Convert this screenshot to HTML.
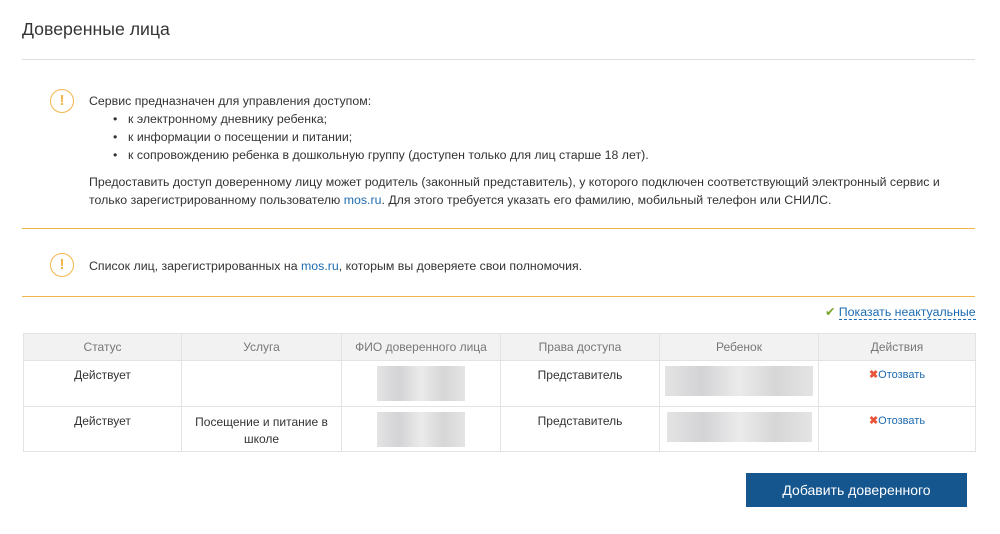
<!DOCTYPE html>
<html><head><meta charset="utf-8"><style>
body{margin:0;width:1000px;height:534px;background:#fff;font-family:"Liberation Sans",sans-serif;color:#333;position:relative;overflow:hidden}
.a{position:absolute}
.t{font-size:12.35px;line-height:17px}
.ic{position:absolute;width:22px;height:22px;border:1.5px solid #f3b54a;border-radius:50%;color:#f3b54a;font-size:15px;font-weight:bold;text-align:center;line-height:22px}
a{color:#1d6bb0;text-decoration:none}
table{position:absolute;left:23px;top:333px;border-collapse:collapse;width:953px;font-size:12px}
td,th{border:1px solid #e3e3e3;text-align:center;vertical-align:top;padding:0}
th{background:#f2f2f2;color:#777;font-weight:normal;height:26px;vertical-align:middle}
.bl{display:inline-block;background:linear-gradient(90deg,#ddd,#c8c8cc,#e6e6e6,#ccc,#ddd);opacity:.8}
.x{color:#e8553b;font-weight:bold;font-size:11px}
.li{position:absolute;left:128px}
.b{position:absolute;left:113px}
</style></head><body>
<div class="a" style="left:22px;top:19px;font-size:17.7px;color:#333">Доверенные лица</div>
<div class="a" style="left:22px;top:59px;width:953px;height:1px;background:#ddd"></div>
<div class="ic" style="left:50px;top:89px">!</div>
<div class="a t" style="left:89px;top:93px">Сервис предназначен для управления доступом:</div>
<div class="t b" style="top:111px">•</div><div class="t li" style="top:111px">к электронному дневнику ребенка;</div>
<div class="t b" style="top:129px">•</div><div class="t li" style="top:129px">к информации о посещении и питании;</div>
<div class="t b" style="top:147px">•</div><div class="t li" style="top:147px">к сопровождению ребенка в дошкольную группу (доступен только для лиц старше 18 лет).</div>
<div class="a t" style="left:89px;top:173px;line-height:18px;white-space:nowrap">Предоставить доступ доверенному лицу может родитель (законный представитель), у которого подключен соответствующий электронный сервис и<br>только зарегистрированному пользователю <a>mos.ru</a>. Для этого требуется указать его фамилию, мобильный телефон или СНИЛС.</div>
<div class="a" style="left:22px;top:228px;width:953px;height:1px;background:#f3b54a"></div>
<div class="ic" style="left:50px;top:253px">!</div>
<div class="a t" style="left:89px;top:258px">Список лиц, зарегистрированных на <a>mos.ru</a>, которым вы доверяете свои полномочия.</div>
<div class="a" style="left:22px;top:296px;width:953px;height:1px;background:#f3b54a"></div>
<div class="a t" style="left:825px;top:304px"><span style="color:#7aa32c">✔</span> <a style="border-bottom:1px dashed #1d6bb0">Показать неактуальные</a></div>
<table>
<tr><th style="width:157px">Статус</th><th style="width:159px">Услуга</th><th style="width:158px">ФИО доверенного лица</th><th style="width:158px">Права доступа</th><th style="width:158px">Ребенок</th><th>Действия</th></tr>
<tr style="height:46px"><td style="padding-top:7px">Действует</td><td></td><td style="padding-top:5px"><span class="bl" style="width:88px;height:35px"></span></td><td style="padding-top:7px">Представитель</td><td style="padding-top:5px"><span class="bl" style="width:148px;height:30px"></span></td><td style="padding-top:7px;font-size:11px"><span class="x">✖</span><a>Отозвать</a></td></tr>
<tr style="height:45px"><td style="padding-top:7px">Действует</td><td style="padding-top:7px;line-height:17px">Посещение и питание в<br>школе</td><td style="padding-top:5px"><span class="bl" style="width:88px;height:35px"></span></td><td style="padding-top:7px">Представитель</td><td style="padding-top:5px"><span class="bl" style="width:145px;height:30px"></span></td><td style="padding-top:7px;font-size:11px"><span class="x">✖</span><a>Отозвать</a></td></tr>
</table>
<div class="a" style="left:746px;top:473px;width:221px;height:34px;background:#15568f;color:#fff;font-size:14px;text-align:center;line-height:34px">Добавить доверенного</div>
</body></html>
